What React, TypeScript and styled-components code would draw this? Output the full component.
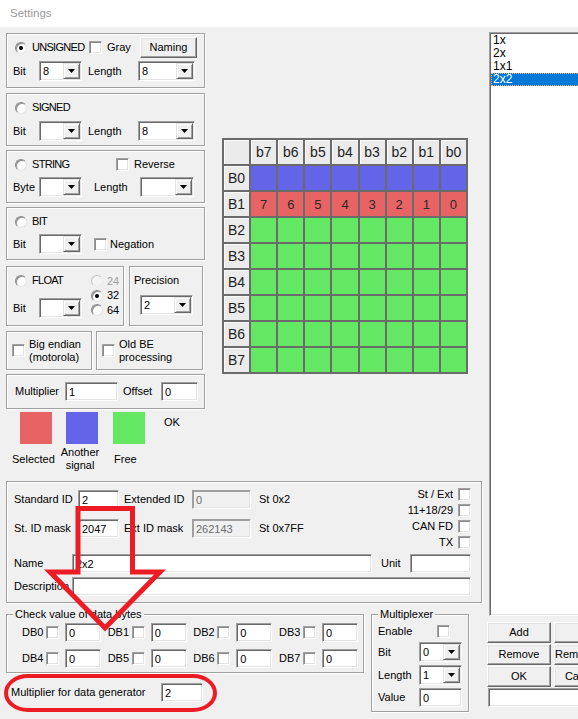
import React from "react";
import styled, { createGlobalStyle } from "styled-components";

const GlobalStyle = createGlobalStyle`
  html, body { margin: 0; padding: 0; background: #f0f0f0; }
  *, *::before, *::after { box-sizing: border-box; }
`;

const FONT = `"Liberation Sans", Arial, sans-serif`;
const COLORS = { selected: "#e86464", other: "#6464e8", free: "#64e864" };

const Window = styled.div`
  position: relative;
  width: 578px;
  height: 719px;
  overflow: hidden;
  background: #f0f0f0;
  font-family: ${FONT};
  font-size: 11px;
  line-height: 13px;
  color: #000;
`;

const TitleBar = styled.div`
  height: 27px;
  background: #fff;
  display: flex;
  align-items: center;
  padding-left: 10px;
  font-size: 11.5px;
  color: #9b9b9b;
`;

const Body = styled.div`
  display: flex;
  align-items: flex-start;
  padding: 5px 0 0 6px;
`;

const LeftArea = styled.div`
  flex: none;
  width: 476px;
  padding-top: 1px;
  display: flex;
  flex-direction: column;
`;

const TopRow = styled.div`
  display: flex;
  align-items: flex-start;
  height: 448px;
`;

const LeftColumn = styled.div`
  flex: none;
  width: 199px;
  display: flex;
  flex-direction: column;
`;

const Group = styled.div<{ $h: number; $w?: number; $mt?: number; $ml?: number }>`
  flex: none;
  border: 1px solid #a0a0a0;
  box-shadow: inset 1px 1px 0 #fff, 1px 1px 0 #fff;
  height: ${(p) => p.$h}px;
  ${(p) => (p.$w != null ? `width: ${p.$w}px;` : "")}
  margin-top: ${(p) => p.$mt ?? 0}px;
  margin-left: ${(p) => p.$ml ?? 0}px;
`;

const TypeGroup = styled(Group)<{ $gap?: number }>`
  display: flex;
  flex-direction: column;
  gap: ${(p) => p.$gap ?? 3}px;
  padding-top: 3px;
`;

const Row = styled.div<{ $h: number; $pl?: number }>`
  flex: none;
  display: flex;
  align-items: center;
  height: ${(p) => p.$h}px;
  padding-left: ${(p) => p.$pl ?? 0}px;
`;

const Text = styled.span<{ $w?: number; $ml?: number; $muted?: boolean }>`
  flex: none;
  white-space: nowrap;
  ${(p) => (p.$w != null ? `width: ${p.$w}px;` : "")}
  margin-left: ${(p) => p.$ml ?? 0}px;
  color: ${(p) => (p.$muted ? "#a0a0a0" : "#000")};
`;

const TypeName = styled(Text)`
  letter-spacing: -0.7px;
`;

const Option = styled.label<{ $w?: number; $gap?: number; $ml?: number }>`
  flex: none;
  display: flex;
  align-items: center;
  gap: ${(p) => p.$gap ?? 5}px;
  ${(p) => (p.$w != null ? `width: ${p.$w}px;` : "")}
  margin-left: ${(p) => p.$ml ?? 0}px;
`;

const Radio = styled.span<{ $on?: boolean; $disabled?: boolean }>`
  position: relative;
  flex: none;
  width: 12px;
  height: 12px;
  border-radius: 50%;
  background: ${(p) => (p.$disabled ? "#f4f4f4" : "#fff")};
  border: 1px solid;
  border-color: ${(p) =>
    p.$disabled ? "#c4c4c4 #ececec #ececec #c4c4c4" : "#8a8a8a #e3e3e3 #e3e3e3 #8a8a8a"};
  box-shadow: ${(p) => (p.$disabled ? "none" : "inset 1px 1px 0 #8f8f8f")};
  &::after {
    content: "";
    display: ${(p) => (p.$on ? "block" : "none")};
    position: absolute;
    left: 3px;
    top: 3px;
    width: 4px;
    height: 4px;
    border-radius: 50%;
    background: #000;
  }
`;

const CheckBox = styled.span<{ $ml?: number }>`
  flex: none;
  width: 13px;
  height: 13px;
  margin-left: ${(p) => p.$ml ?? 0}px;
  background: #fff;
  border: 1px solid;
  border-color: #a0a0a0 #fff #fff #a0a0a0;
  box-shadow: inset 1px 1px 0 #8a8a8a, inset -1px -1px 0 #e3e3e3;
`;

const Field = styled.input<{ $w: number; $ml?: number; $mt?: number; $off?: boolean }>`
  flex: none;
  width: ${(p) => p.$w}px;
  height: 19px;
  margin: ${(p) => p.$mt ?? 0}px 0 0 ${(p) => p.$ml ?? 0}px;
  padding: 0 0 0 3px;
  font: inherit;
  color: ${(p) => (p.$off ? "#6d6d6d" : "#000")};
  background: ${(p) => (p.$off ? "#f0f0f0" : "#fff")};
  outline: none;
  border: 1px solid;
  border-color: #a0a0a0 #fff #fff #a0a0a0;
  box-shadow: inset 1px 1px 0 ${(p) => (p.$off ? "#a0a0a0" : "#696969")}, inset -1px -1px 0 #e3e3e3;
`;

const SelectFrame = styled.div<{ $w: number; $ml?: number; $mt?: number }>`
  flex: none;
  display: flex;
  width: ${(p) => p.$w}px;
  height: 20px;
  margin: ${(p) => p.$mt ?? 0}px 0 0 ${(p) => p.$ml ?? 0}px;
  padding: 1px;
  background: #fff;
  border: 1px solid;
  border-color: #a0a0a0 #fff #fff #a0a0a0;
  box-shadow: inset 1px 1px 0 #696969, inset -1px -1px 0 #e3e3e3;
`;

const SelectValue = styled.span`
  flex: 1;
  display: flex;
  align-items: center;
  padding-left: 2px;
`;

const DropButton = styled.span`
  flex: none;
  width: 17px;
  display: flex;
  align-items: center;
  justify-content: center;
  background: #f0f0f0;
  border: 1px solid;
  border-color: #e3e3e3 #696969 #696969 #e3e3e3;
  box-shadow: inset 1px 1px 0 #fff, inset -1px -1px 0 #a0a0a0;
`;

function Select({ w, value = "", ml, mt }: { w: number; value?: string; ml?: number; mt?: number }) {
  return (
    <SelectFrame $w={w} $ml={ml} $mt={mt}>
      <SelectValue>{value}</SelectValue>
      <DropButton>
        <svg width="7" height="4" viewBox="0 0 7 4">
          <path d="M0 0H7L3.5 4Z" fill="#000" />
        </svg>
      </DropButton>
    </SelectFrame>
  );
}

const PushButton = styled.button<{ $w?: number }>`
  flex: none;
  ${(p) => (p.$w != null ? `width: ${p.$w}px;` : "")}
  height: 21px;
  margin: 0;
  padding: 0;
  font: inherit;
  color: #000;
  background: #f0f0f0;
  white-space: nowrap;
  overflow: hidden;
  border: 1px solid;
  border-color: #fff #696969 #696969 #fff;
  box-shadow: inset -1px -1px 0 #a0a0a0, inset 1px 1px 0 #e3e3e3;
`;

/* Float + precision */
const FloatRow = styled.div`
  flex: none;
  display: flex;
  height: 60px;
  margin-top: 6px;
`;

const FloatGroup = styled(Group)`
  display: flex;
`;

const FloatMain = styled.div`
  flex: none;
  width: 84px;
  display: flex;
  flex-direction: column;
  gap: 7px;
  padding-top: 3px;
`;

const WidthStack = styled.div`
  display: flex;
  flex-direction: column;
  padding-top: 7px;
`;

const StackOption = styled(Option)`
  height: 14.5px;
`;

const PrecisionGroup = styled(Group)`
  display: flex;
  flex-direction: column;
  align-items: flex-start;
  padding: 7px 0 0 4px;
`;

/* Endian */
const EndianRow = styled.div`
  flex: none;
  display: flex;
  height: 39px;
  margin-top: 5px;
`;

const EndianGroup = styled(Group)`
  display: flex;
  align-items: center;
  gap: 4px;
  padding-left: 5px;
`;

const TwoLine = styled.span<{ $center?: boolean; $w?: number; $ml?: number }>`
  flex: none;
  display: flex;
  flex-direction: column;
  ${(p) => (p.$w != null ? `width: ${p.$w}px;` : "")}
  margin-left: ${(p) => p.$ml ?? 0}px;
  align-items: ${(p) => (p.$center ? "center" : "flex-start")};
  white-space: nowrap;
`;

const MultGroup = styled(Group)`
  display: flex;
  align-items: center;
  padding-left: 8px;
`;

/* Legend */
const SwatchRow = styled.div`
  flex: none;
  display: flex;
  align-items: flex-start;
  height: 32px;
  margin-top: 3px;
`;

const Swatch = styled.span<{ $color: string; $ml: number }>`
  flex: none;
  width: 32px;
  height: 32px;
  margin-left: ${(p) => p.$ml}px;
  background: ${(p) => p.$color};
`;

const OkNote = styled(Text)`
  margin-top: 4px;
`;

const LegendLabels = styled.div`
  flex: none;
  display: flex;
  align-items: center;
  margin-top: 2px;
`;

/* Byte grid */
const ByteGrid = styled.div`
  flex: none;
  margin: 105px 0 0 17px;
  width: 246px;
  height: 236px;
  display: grid;
  grid-template-columns: repeat(9, 1fr);
  grid-template-rows: repeat(9, 1fr);
  gap: 2px;
  padding: 2px;
  background: #6b6b6b;
`;

const HeadCell = styled.div`
  display: flex;
  align-items: center;
  justify-content: center;
  background: #ebebeb;
  box-shadow: inset 1px 1px 0 #fbfbfb;
  font-size: 14px;
  color: #1e1e1e;
`;

const BitCell = styled.div<{ $kind: keyof typeof COLORS }>`
  display: flex;
  align-items: center;
  justify-content: center;
  background: ${(p) => COLORS[p.$kind]};
  font-size: 13px;
  color: #2a2a2a;
`;

/* ID group */
const IdGroup = styled(Group)`
  display: flex;
  flex-direction: column;
  padding: 4px 10px 0 7px;
`;

const IdTop = styled.div`
  flex: none;
  display: flex;
  height: 64px;
`;

const IdFields = styled.div`
  display: flex;
  flex-direction: column;
  gap: 10px;
  padding-top: 4px;
`;

const Flags = styled.div`
  margin-left: auto;
  display: flex;
  flex-direction: column;
`;

const FlagRow = styled.label`
  height: 16px;
  display: flex;
  align-items: center;
  justify-content: flex-end;
  gap: 5px;
  white-space: nowrap;
`;

const IdRow = styled.div`
  flex: none;
  display: flex;
  align-items: center;
  height: 19px;
  margin-top: 4px;
`;

/* bottom */
const BottomRow = styled.div`
  flex: none;
  display: flex;
  align-items: flex-start;
  margin-top: 11px;
`;

const BottomLeft = styled.div`
  flex: none;
  width: 358px;
  display: flex;
  flex-direction: column;
`;

const CaptionGroup = styled(Group)`
  position: relative;
`;

const Caption = styled.span`
  position: absolute;
  top: -7px;
  left: 6px;
  padding: 0 2px;
  line-height: 13px;
  background: #f0f0f0;
  white-space: nowrap;
`;

const DbGrid = styled.div`
  display: grid;
  grid-template-columns: repeat(4, 85.67px);
  row-gap: 7px;
  padding: 8px 0 0 15px;
`;

const DbCell = styled.div`
  display: flex;
  align-items: center;
  height: 19px;
`;

const GeneratorRow = styled.div`
  flex: none;
  display: flex;
  align-items: center;
  height: 19px;
  margin-top: 10px;
  padding-left: 5px;
`;

const MuxBody = styled.div`
  display: flex;
  flex-direction: column;
  gap: 3px;
  padding: 8px 0 0 6px;
`;

/* Right column */
const RightArea = styled.div`
  flex: none;
  width: 140px;
  margin-left: 5px;
  display: flex;
  flex-direction: column;
`;

const ListBox = styled.div`
  flex: none;
  width: 138px;
  height: 584px;
  margin-left: 2px;
  padding: 1px;
  background: #fff;
  border: 1px solid;
  border-color: #a0a0a0 #fff #fff #a0a0a0;
  box-shadow: inset 1px 1px 0 #696969, inset -1px -1px 0 #e3e3e3;
  font-size: 12px;
`;

const ListItem = styled.div<{ $selected?: boolean }>`
  height: 13px;
  line-height: 13px;
  padding-left: 2px;
  white-space: nowrap;
  ${(p) =>
    p.$selected
      ? `background: #0078d7; color: #fff; outline: 1px dotted #f2b36a; outline-offset: -1px;`
      : ""}
`;

const ButtonGrid = styled.div`
  display: grid;
  grid-template-columns: 64px 56px;
  grid-auto-rows: 21px;
  column-gap: 3px;
  row-gap: 1px;
  margin-top: 6px;
`;

const Overlay = styled.svg`
  position: absolute;
  left: 0;
  top: 0;
  pointer-events: none;
`;

const bits = ["b7", "b6", "b5", "b4", "b3", "b2", "b1", "b0"];
const bytes = ["B0", "B1", "B2", "B3", "B4", "B5", "B6", "B7"];

export default function App() {
  return (
    <Window>
      <GlobalStyle />
      <TitleBar>Settings</TitleBar>
      <Body>
        <LeftArea>
          <TopRow>
            <LeftColumn>
              <TypeGroup $h={55}>
                <Row $h={21} $pl={8}>
                  <Option $w={74}>
                    <Radio $on />
                    <TypeName>UNSIGNED</TypeName>
                  </Option>
                  <Option $w={51}>
                    <CheckBox />
                    <Text>Gray</Text>
                  </Option>
                  <PushButton $w={57}>Naming</PushButton>
                </Row>
                <Row $h={20} $pl={6}>
                  <Text $w={26}>Bit</Text>
                  <Select w={43} value="8" />
                  <Text $w={50} $ml={6}>Length</Text>
                  <Select w={57} value="8" />
                </Row>
              </TypeGroup>

              <TypeGroup $h={53} $mt={5}>
                <Row $h={21} $pl={8}>
                  <Option>
                    <Radio />
                    <TypeName>SIGNED</TypeName>
                  </Option>
                </Row>
                <Row $h={20} $pl={6}>
                  <Text $w={26}>Bit</Text>
                  <Select w={43} />
                  <Text $w={50} $ml={6}>Length</Text>
                  <Select w={57} value="8" />
                </Row>
              </TypeGroup>

              <TypeGroup $h={53} $mt={4} $gap={2}>
                <Row $h={21} $pl={8}>
                  <Option $w={101}>
                    <Radio />
                    <TypeName>STRING</TypeName>
                  </Option>
                  <Option>
                    <CheckBox />
                    <Text>Reverse</Text>
                  </Option>
                </Row>
                <Row $h={20} $pl={6}>
                  <Text $w={26}>Byte</Text>
                  <Select w={43} />
                  <Text $w={46} $ml={12}>Length</Text>
                  <Select w={54} />
                </Row>
              </TypeGroup>

              <TypeGroup $h={53} $mt={4} $gap={2}>
                <Row $h={21} $pl={8}>
                  <Option>
                    <Radio />
                    <TypeName>BIT</TypeName>
                  </Option>
                </Row>
                <Row $h={20} $pl={6}>
                  <Text $w={26}>Bit</Text>
                  <Select w={43} />
                  <Option $ml={12} $gap={3}>
                    <CheckBox />
                    <Text>Negation</Text>
                  </Option>
                </Row>
              </TypeGroup>

              <FloatRow>
                <FloatGroup $h={60} $w={118}>
                  <FloatMain>
                    <Row $h={21} $pl={8}>
                      <Option>
                        <Radio />
                        <TypeName>FLOAT</TypeName>
                      </Option>
                    </Row>
                    <Row $h={20} $pl={6}>
                      <Text $w={26}>Bit</Text>
                      <Select w={43} />
                    </Row>
                  </FloatMain>
                  <WidthStack>
                    <StackOption $gap={4}>
                      <Radio $disabled />
                      <Text $muted>24</Text>
                    </StackOption>
                    <StackOption $gap={4}>
                      <Radio $on />
                      <Text>32</Text>
                    </StackOption>
                    <StackOption $gap={4}>
                      <Radio />
                      <Text>64</Text>
                    </StackOption>
                  </WidthStack>
                </FloatGroup>
                <PrecisionGroup $h={60} $w={74} $ml={5}>
                  <Text>Precision</Text>
                  <Select w={53} value="2" ml={6} mt={8} />
                </PrecisionGroup>
              </FloatRow>

              <EndianRow>
                <EndianGroup $h={39} $w={86}>
                  <CheckBox />
                  <TwoLine>
                    <span>Big endian</span>
                    <span>(motorola)</span>
                  </TwoLine>
                </EndianGroup>
                <EndianGroup $h={39} $w={107} $ml={4}>
                  <CheckBox />
                  <TwoLine>
                    <span>Old BE</span>
                    <span>processing</span>
                  </TwoLine>
                </EndianGroup>
              </EndianRow>

              <MultGroup $h={35} $mt={4}>
                <Text $w={50}>Multiplier</Text>
                <Field $w={53} defaultValue="1" readOnly />
                <Text $w={38} $ml={5}>Offset</Text>
                <Field $w={37} defaultValue="0" readOnly />
              </MultGroup>

              <SwatchRow>
                <Swatch $color={COLORS.selected} $ml={14} />
                <Swatch $color={COLORS.other} $ml={14} />
                <Swatch $color={COLORS.free} $ml={15} />
                <OkNote $ml={19}>OK</OkNote>
              </SwatchRow>
              <LegendLabels>
                <Text $w={43} $ml={6}>Selected</Text>
                <TwoLine $center $w={40} $ml={5}>
                  <span>Another</span>
                  <span>signal</span>
                </TwoLine>
                <Text $ml={14}>Free</Text>
              </LegendLabels>
            </LeftColumn>

            <ByteGrid>
              <HeadCell />
              {bits.map((b) => (
                <HeadCell key={b}>{b}</HeadCell>
              ))}
              {bytes.map((r, i) => (
                <React.Fragment key={r}>
                  <HeadCell>{r}</HeadCell>
                  {bits.map((b, j) => (
                    <BitCell key={b} $kind={i === 0 ? "other" : i === 1 ? "selected" : "free"}>
                      {i === 1 ? 7 - j : ""}
                    </BitCell>
                  ))}
                </React.Fragment>
              ))}
            </ByteGrid>
          </TopRow>

          <IdGroup $h={122}>
            <IdTop>
              <IdFields>
                <Row $h={19}>
                  <Text $w={64}>Standard ID</Text>
                  <Field $w={41} defaultValue="2" readOnly />
                  <Text $w={68} $ml={5}>Extended ID</Text>
                  <Field $w={59} defaultValue="0" readOnly $off />
                  <Text $ml={8}>St 0x2</Text>
                </Row>
                <Row $h={19}>
                  <Text $w={64}>St. ID mask</Text>
                  <Field $w={41} defaultValue="2047" readOnly />
                  <Text $w={68} $ml={5}>Ext ID mask</Text>
                  <Field $w={59} defaultValue="262143" readOnly $off />
                  <Text $ml={8}>St 0x7FF</Text>
                </Row>
              </IdFields>
              <Flags>
                <FlagRow>
                  <span>St / Ext</span>
                  <CheckBox />
                </FlagRow>
                <FlagRow>
                  <span>11+18/29</span>
                  <CheckBox />
                </FlagRow>
                <FlagRow>
                  <span>CAN FD</span>
                  <CheckBox />
                </FlagRow>
                <FlagRow>
                  <span>TX</span>
                  <CheckBox />
                </FlagRow>
              </Flags>
            </IdTop>
            <IdRow>
              <Text $w={58}>Name</Text>
              <Field $w={300} defaultValue="2x2" readOnly />
              <Text $w={29} $ml={9}>Unit</Text>
              <Field $w={61} defaultValue="" readOnly />
            </IdRow>
            <IdRow>
              <Text $w={58}>Description</Text>
              <Field $w={399} defaultValue="" readOnly />
            </IdRow>
          </IdGroup>

          <BottomRow>
            <BottomLeft>
              <CaptionGroup $h={59}>
                <Caption>Check value of data bytes</Caption>
                <DbGrid>
                  {[0, 1, 2, 3, 4, 5, 6, 7].map((n) => (
                    <DbCell key={n}>
                      <Text $w={24}>DB{n}</Text>
                      <CheckBox />
                      <Field $w={36} $ml={6} defaultValue="0" readOnly />
                    </DbCell>
                  ))}
                </DbGrid>
              </CaptionGroup>
              <GeneratorRow>
                <Text $w={150}>Multiplier for data generator</Text>
                <Field $w={42} defaultValue="2" readOnly />
              </GeneratorRow>
            </BottomLeft>

            <CaptionGroup $h={98} $w={98} $ml={7}>
              <Caption>Multiplexer</Caption>
              <MuxBody>
                <Row $h={16}>
                  <Text $w={59}>Enable</Text>
                  <CheckBox />
                </Row>
                <Row $h={20}>
                  <Text $w={41}>Bit</Text>
                  <Select w={43} value="0" />
                </Row>
                <Row $h={20}>
                  <Text $w={41}>Length</Text>
                  <Select w={43} value="1" />
                </Row>
                <Row $h={19}>
                  <Text $w={41}>Value</Text>
                  <Field $w={43} defaultValue="0" readOnly />
                </Row>
              </MuxBody>
            </CaptionGroup>
          </BottomRow>
        </LeftArea>

        <RightArea>
          <ListBox>
            <ListItem>1x</ListItem>
            <ListItem>2x</ListItem>
            <ListItem>1x1</ListItem>
            <ListItem $selected>2x2</ListItem>
          </ListBox>
          <ButtonGrid>
            <PushButton>Add</PushButton>
            <PushButton></PushButton>
            <PushButton>Remove</PushButton>
            <PushButton>Remove all</PushButton>
            <PushButton>OK</PushButton>
            <PushButton>Cancel</PushButton>
          </ButtonGrid>
          <Field $w={110} $ml={1} $mt={1} defaultValue="" readOnly />
        </RightArea>
      </Body>

      <Overlay width="578" height="719" viewBox="0 0 578 719">
        <path
          d="M78 508.5H132.5V572H160L105 628L50 572H78Z"
          fill="none"
          stroke="#ed1c24"
          strokeWidth="5"
          strokeLinejoin="miter"
        />
        <rect x="6" y="676" width="209" height="34" rx="22" ry="17" fill="none" stroke="#ed1c24" strokeWidth="4" />
      </Overlay>
    </Window>
  );
}
